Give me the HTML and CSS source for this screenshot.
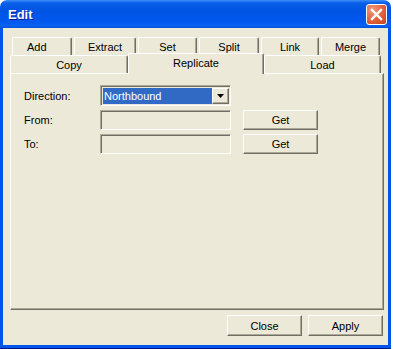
FILE: index.html
```html
<!DOCTYPE html>
<html>
<head>
    <title>Edit</title>
    <link rel="stylesheet" href="styles.css">
</head>
<body>
    <div class="window">
        <div class="titlebar">
            <span class="title">Edit</span>
            <div class="close-btn">
                <svg width="21" height="21" viewBox="0 0 21 21">
                    <path d="M6 6 L15 15 M15 6 L6 15" stroke="#fff" stroke-width="2.4" stroke-linecap="square" fill="none"/>
                </svg>
            </div>
        </div>
        <div class="client">
            <div class="tabs">
                <div class="tab-row tab-row-back">
                    <div class="tab tab-add">Add</div>
                    <div class="tab tab-extract">Extract</div>
                    <div class="tab tab-set">Set</div>
                    <div class="tab tab-split">Split</div>
                    <div class="tab tab-link">Link</div>
                    <div class="tab tab-merge">Merge</div>
                </div>
                <div class="tab-row tab-row-front">
                    <div class="tab tab-copy">Copy</div>
                    <div class="tab tab-replicate active">Replicate</div>
                    <div class="tab tab-load">Load</div>
                </div>
                <div class="tab-panel">
                    <div class="form-grid">
                        <label class="field-label">Direction:</label>
                        <div class="combo">
                            <span class="combo-value">Northbound</span>
                            <span class="combo-arrow">
                                <svg width="7" height="4" viewBox="0 0 7 4"><path d="M0 0 H7 L3.5 4 Z" fill="#000"/></svg>
                            </span>
                        </div>
                        <span></span>

                        <label class="field-label">From:</label>
                        <div class="textbox"></div>
                        <button class="xp-button">Get</button>

                        <label class="field-label">To:</label>
                        <div class="textbox"></div>
                        <button class="xp-button">Get</button>
                    </div>
                </div>
            </div>
            <div class="footer">
                <button class="xp-button">Close</button>
                <button class="xp-button">Apply</button>
            </div>
        </div>
    </div>
</body>
</html>
```

FILE: styles.css
```css
body {
    margin: 0;
    background: #fff;
    font-family: "Liberation Sans", Arial, sans-serif;
    font-size: 11px;
    color: #000;
}
.window {
    width: 391px;
    height: 349px;
    box-sizing: border-box;
    background: linear-gradient(180deg, #3d8cf7 0px, #0a5fe8 3px, #0054e3 10px, #0058ee 22px, #0a62f0 26px, #0050dc 28px, #0055ea 30px);
    border-radius: 7px 7px 0 0;
    display: flex;
    flex-direction: column;
    border-bottom: 1px solid #00138c;
}
.titlebar {
    height: 28px;
    display: flex;
    align-items: center;
    justify-content: space-between;
    padding: 0 4px 0 8px;
}
.title {
    color: #fff;
    font-weight: bold;
    font-size: 13px;
    text-shadow: 1px 1px #0a1a8a;
}
.close-btn {
    width: 21px;
    height: 21px;
    box-sizing: border-box;
    border: 1px solid #fff;
    border-radius: 3px;
    background: radial-gradient(circle at 30% 25%, #f09a80, #e2603a 55%, #c6421f);
    display: flex;
    align-items: center;
    justify-content: center;
    margin-top: 1px;
}
.close-btn svg {
    margin: -1px;
}
.client {
    flex: 1;
    margin: 0 3px 3px 3px;
    background: #ece9d8;
    display: flex;
    flex-direction: column;
}
.tabs {
    margin: 9px 0 0 7px;
}
.tab-row {
    display: flex;
}
.tab {
    box-sizing: border-box;
    height: 18px;
    background: #ece9d8;
    border-top: 1px solid #fff;
    border-left: 1px solid #fff;
    border-right: 1px solid #716f64;
    box-shadow: inset -1px 0 #aca899;
    border-radius: 2px 2px 0 0;
    display: flex;
    align-items: center;
    justify-content: center;
    padding-top: 1px;
}
.tab-row-back {
    padding-left: 2px;
    gap: 2px;
}
.tab-add { width: 60px; justify-content: flex-start; padding-left: 14px; }
.tab-extract { width: 62px; }
.tab-set { width: 59px; }
.tab-split { width: 60px; }
.tab-link { width: 58px; }
.tab-merge { width: 59px; }
.tab-copy { width: 118px; }
.tab-replicate { width: 136px; }
.tab-load { width: 117px; }
.tab.active {
    height: 21px;
    margin-top: -2px;
    margin-bottom: -1px;
    position: relative;
    z-index: 1;
    align-items: flex-start;
    padding-top: 3px;
}
.tab-panel {
    width: 374px;
    height: 237px;
    box-sizing: border-box;
    border-top: 1px solid #fff;
    border-left: 1px solid #fff;
    border-right: 1px solid #716f64;
    border-bottom: 1px solid #716f64;
    box-shadow: inset -1px -1px #aca899;
    padding: 11px 0 0 13px;
}
.form-grid {
    display: grid;
    grid-template-columns: 64px 131px 75px;
    grid-template-rows: 21px 20px 20px;
    column-gap: 12px;
    row-gap: 4px;
    align-items: center;
}
.form-grid > * {
    height: 100%;
}
.field-label {
    display: flex;
    align-items: center;
}
.textbox,
.combo {
    box-sizing: border-box;
    border: 1px solid;
    border-color: #aca899 #fff #fff #aca899;
    box-shadow: inset 1px 1px #716f64;
    background: #ece9d8;
}
.combo {
    display: flex;
    padding: 2px 1px 1px 2px;
}
.combo-value {
    flex: 1;
    background: #316ac5;
    color: #fff;
    display: flex;
    align-items: center;
    padding-left: 1px;
}
.combo-arrow {
    width: 17px;
    box-sizing: border-box;
    border: 1px solid;
    border-color: #fff #716f64 #716f64 #fff;
    box-shadow: inset -1px -1px #aca899;
    display: flex;
    align-items: center;
    justify-content: center;
}
.xp-button {
    box-sizing: border-box;
    width: 75px;
    height: 21px;
    background: #ece9d8;
    border: 1px solid;
    border-color: #fff #716f64 #716f64 #fff;
    box-shadow: inset -1px -1px #aca899;
    font-family: "Liberation Sans", Arial, sans-serif;
    font-size: 11px;
    color: #000;
    padding: 0;
}
.form-grid .xp-button {
    height: 20px;
}
.footer {
    display: flex;
    justify-content: flex-end;
    gap: 6px;
    margin-top: 5px;
    padding-right: 5px;
}
```
